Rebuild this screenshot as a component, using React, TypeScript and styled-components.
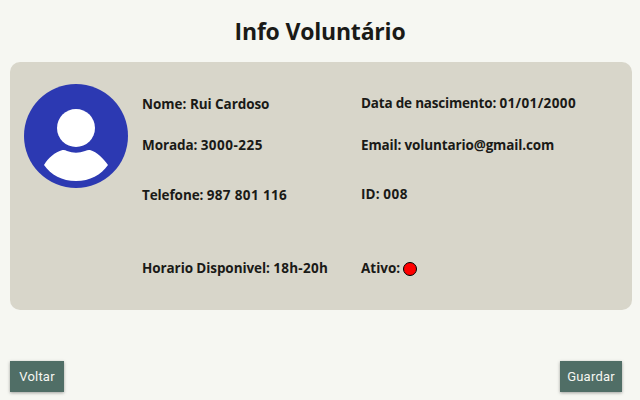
import React from "react";
import styled, { createGlobalStyle } from "styled-components";

const GlobalStyle = createGlobalStyle`
  * { box-sizing: border-box; }
  body { margin: 0; background: #f6f7f2; overflow: hidden; }
`;

const Page = styled.main`
  display: flex;
  flex-direction: column;
  width: 640px;
  height: 400px;
  padding: 0 8px 8px 10px;
  background: #f6f7f2;
  color: #1a1a17;
  font-family: "Open Sans", "Noto Sans", sans-serif;
`;

const Title = styled.h1`
  margin: 0 0 0 -2px;
  height: 62px;
  font-size: 23px;
  line-height: 62px;
  font-weight: 700;
  text-align: center;
  letter-spacing: -0.2px;
`;

const Card = styled.section`
  display: flex;
  height: 248px;
  padding: 21px 14px;
  gap: 14px;
  border-radius: 10px;
  background: #d8d6ca;
`;

const Avatar = styled.svg`
  flex: none;
  width: 104px;
  height: 106px;
`;

const Details = styled.div`
  display: grid;
  grid-template-columns: 219px 1fr;
  grid-template-rows: 41px 50px 73px 20px;
  padding-top: 11px;
`;

const Field = styled.div<{ $lift?: number }>`
  display: flex;
  align-items: center;
  height: 20px;
  margin-top: ${({ $lift = 0 }) => -$lift}px;
  font-size: 13.5px;
  line-height: 20px;
  font-weight: 700;
  white-space: pre;
`;

const Label = styled.span<{ $spacing?: number }>`
  letter-spacing: ${({ $spacing = 0 }) => $spacing}px;
`;

const Value = styled.span<{ $spacing?: number }>`
  letter-spacing: ${({ $spacing = 0 }) => $spacing}px;
`;

const StatusDot = styled.span`
  width: 14px;
  height: 14px;
  margin: 2px 0 0 3px;
  border: 1px solid #000;
  border-radius: 50%;
  background: #f00;
`;

const Actions = styled.footer`
  display: flex;
  justify-content: space-between;
  margin-top: 51px;
  padding-right: 10px;
`;

const Button = styled.button<{ $width: number }>`
  width: ${({ $width }) => $width}px;
  height: 31px;
  padding: 0;
  border: 0;
  background: #506e66;
  color: #f6f7f2;
  box-shadow: 0 1px 3px rgba(0, 0, 0, 0.35);
  font-family: Roboto, sans-serif;
  font-size: 13px;
  font-weight: 400;
  letter-spacing: 0.2px;
`;

export default function App() {
  return (
    <Page>
      <GlobalStyle />
      <Title>Info Voluntário</Title>
      <Card>
        <Avatar viewBox="0 0 104 106" aria-label="Voluntário">
          <circle cx="52" cy="53" r="52" fill="#2c39b2" />
          <circle cx="52" cy="45" r="19" fill="#fff" />
          <path
            d="M20 82 C24 75 31 69 38.500 67 Q41 66.500 43 68 Q52 71.500 61 68 Q64 66.500 66 67 C73 69 80 76 84 82 C77 92 66 98 52 98 C38 98 27 92 20 82Z"
            fill="#fff"
          />
        </Avatar>
        <Details>
          <Field>
            <Label>Nome: </Label>
            <Value $spacing={-0.08}>Rui Cardoso</Value>
          </Field>
          <Field $lift={1}>
            <Label $spacing={-0.19}>Data de nascimento: </Label>
            <Value $spacing={0.37}>01/01/2000</Value>
          </Field>
          <Field>
            <Label $spacing={-0.1}>Morada: </Label>
            <Value $spacing={0.48}>3000-225</Value>
          </Field>
          <Field>
            <Label $spacing={-0.15}>Email: </Label>
            <Value $spacing={-0.14}>voluntario@gmail.com</Value>
          </Field>
          <Field>
            <Label $spacing={-0.1}>Telefone: </Label>
            <Value $spacing={0.36}>987 801 116</Value>
          </Field>
          <Field $lift={1}>
            <Label $spacing={0.1}>ID: </Label>
            <Value $spacing={0.5}>008</Value>
          </Field>
          <Field>
            <Label $spacing={-0.09}>Horario Disponivel: </Label>
            <Value $spacing={0.28}>18h-20h</Value>
          </Field>
          <Field>
            <Label>Ativo:</Label>
            <StatusDot />
          </Field>
        </Details>
      </Card>
      <Actions>
        <Button $width={54}>Voltar</Button>
        <Button $width={62}>Guardar</Button>
      </Actions>
    </Page>
  );
}
